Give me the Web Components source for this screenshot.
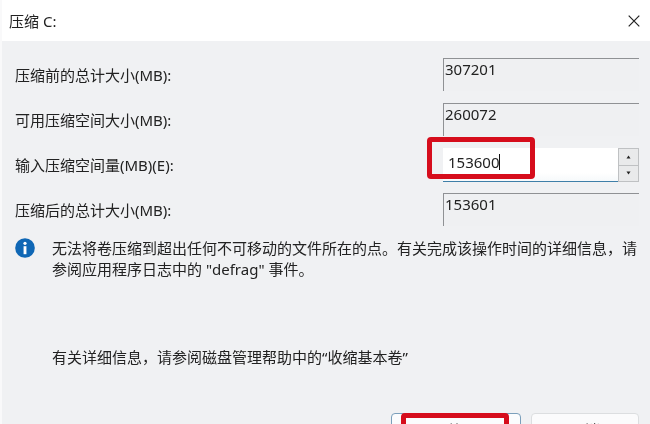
<!DOCTYPE html>
<html>
<head>
<meta charset="utf-8">
<style>
  html, body { margin: 0; padding: 0; background: #f0f1f3; }
  body { width: 650px; height: 424px; overflow: hidden; font-family: "Noto Sans", "Noto Sans CJK SC", sans-serif; }
</style>
</head>
<body>
<shrink-dialog heading="压缩 C:">
  <size-row label="压缩前的总计大小(MB):" value="307201"></size-row>
  <size-row label="可用压缩空间大小(MB):" value="260072"></size-row>
  <size-row label="输入压缩空间量(MB)(E):" value="153600" editable></size-row>
  <size-row label="压缩后的总计大小(MB):" value="153601"></size-row>
</shrink-dialog>
<script>
function safeDefine(name, clazz) {
  if (!customElements.get(name)) customElements.define(name, clazz);
}

const FONT = '"Noto Sans", "Noto Sans CJK SC", sans-serif';

// -- size-row --
class SizeRow extends HTMLElement {
  connectedCallback() {
    if (this.shadowRoot) return;
    this.attachShadow({ mode: 'open' });
    const label = this.getAttribute('label') || '';
    const value = this.getAttribute('value') || '';
    const field = this.hasAttribute('editable')
      ? `<div class="spin"><div class="entry"><span class="num">${value}</span><i class="caret"></i></div>
         <div class="arrows"><b><svg width="5" height="4" viewBox="0 0 5 4"><path d="M2.5 .5L4.5 3.5H.5z" fill="#222"/></svg></b><b><svg width="5" height="4" viewBox="0 0 5 4"><path d="M.5 .5H4.5L2.5 3.5z" fill="#222"/></svg></b></div></div>`
      : `<div class="field"><span>${value}</span></div>`;
    this.shadowRoot.innerHTML = `
      <style>
        :host { display: grid; grid-template-columns: 428px 196px; align-items: stretch; height: 34px; font-family: ${FONT}; color: #222; }
        .label { font-size: 15px; line-height: 20px; align-self: center; margin-top: -1px; }
        .field { box-sizing: border-box; height: 33px; border-top: 1px solid #8f9194; border-left: 1px solid #8f9194; font-size: 15px; line-height: 20px; padding-left: 1px; background: #eff0f2; }
        .spin { display: flex; height: 34px; }
        .entry { flex: 1; display: flex; align-items: center; padding: 0 0 5px 5px; background: linear-gradient(#fff 75%, #f6f9fb); border-bottom: 1px solid #3f7fa8; font-size: 15px; }
        .caret { display: block; width: 1px; height: 16px; background: #111; }
        .arrows { width: 21px; display: grid; grid-template-rows: 1fr 1fr; gap: 1px; background: #bfc1c3; border: 1px solid #bfc1c3; box-sizing: border-box; }
        .arrows b { display: flex; align-items: center; justify-content: center; background: #e9eaeb; }
      </style>
      <div class="label">${label}</div>
      ${field}`;
  }
}
safeDefine('size-row', SizeRow);

// -- info-note --
class InfoNote extends HTMLElement {
  connectedCallback() {
    if (this.shadowRoot) return;
    this.attachShadow({ mode: 'open' });
    this.shadowRoot.innerHTML = `
      <style>
        :host { display: grid; grid-template-columns: 37px 1fr; font-family: ${FONT}; color: #222; font-size: 15px; line-height: 21px; }
        svg { display: block; }
      </style>
      <svg width="20" height="20" viewBox="0 0 21 21">
        <circle cx="10.5" cy="10.5" r="10.3" fill="#0f67b5"/>
        <circle cx="10.5" cy="5.6" r="1.7" fill="#fff"/>
        <rect x="9" y="8.6" width="3" height="8.4" fill="#fff"/>
      </svg>
      <div><slot></slot></div>`;
  }
}
safeDefine('info-note', InfoNote);

// -- dialog-button --
class DialogButton extends HTMLElement {
  connectedCallback() {
    if (this.shadowRoot) return;
    this.attachShadow({ mode: 'open' });
    this.shadowRoot.innerHTML = `
      <style>
        :host { display: block; box-sizing: border-box; width: 108px; height: 34px; border: 1px solid #dcdee0; border-radius: 4px; background: #fbfbfc; text-align: center; font-family: ${FONT}; font-size: 15px; line-height: 32px; color: #222; }
        :host([primary]) { width: 130px; border-color: #7b9fbb; background: #fbfcfd; }
      </style>
      <slot></slot>`;
  }
}
safeDefine('dialog-button', DialogButton);

// -- red-mark: hand drawn highlight lying over the screenshot --
class RedMark extends HTMLElement {
  connectedCallback() {
    if (this.shadowRoot) return;
    this.attachShadow({ mode: 'open' });
    this.shadowRoot.innerHTML = `
      <style>
        :host { display: block; position: absolute; box-sizing: border-box; border: 5px solid #d60d1c; border-radius: 4px; }
      </style>`;
  }
}
safeDefine('red-mark', RedMark);

// -- shrink-dialog --
class ShrinkDialog extends HTMLElement {
  connectedCallback() {
    if (this.shadowRoot) return;
    this.attachShadow({ mode: 'open' });
    this.shadowRoot.innerHTML = `
      <style>
        :host { display: block; position: relative; box-sizing: border-box; width: 650px; height: 424px; overflow: hidden; background: #f0f1f3; border-left: 2px solid #f9f9fa; font-family: ${FONT}; color: #222; filter: blur(.3px); }
        header { display: flex; align-items: center; justify-content: space-between; height: 41px; padding: 0 10px 0 7px; background: #fff; font-size: 15px; }
        .body { padding: 17px 11px 0 13px; }
        .rows { display: flex; flex-direction: column; gap: 11px; }
        info-note { margin-top: 11px; }
        .more { margin: 67px 0 0 37px; font-size: 15px; line-height: 20px; }
        .actions { display: flex; justify-content: flex-end; gap: 10px; margin: 46px 0 0; }
        .first { top: 413px; left: 399px; width: 108px; height: 30px; }
        .second { top: 137px; left: 425px; width: 108px; height: 42px; }
      </style>
      <header><span>${this.getAttribute('heading') || ''}</span>
        <svg width="12" height="12" viewBox="0 0 12 12"><path d="M.7 .7L11.3 11.3M11.3 .7L.7 11.3" stroke="#222" stroke-width="1.2" fill="none"/></svg>
      </header>
      <div class="body">
        <div class="rows"><slot></slot></div>
        <info-note>无法将卷压缩到超出任何不可移动的文件所在的点。有关完成该操作时间的详细信息，请参阅应用程序日志中的 "defrag" 事件。</info-note>
        <div class="more">有关详细信息，请参阅磁盘管理帮助中的“收缩基本卷”</div>
        <div class="actions"><dialog-button primary>压缩(S)</dialog-button><dialog-button>取消</dialog-button></div>
      </div>
      <red-mark class="second"></red-mark>
      <red-mark class="first"></red-mark>`;
  }
}
safeDefine('shrink-dialog', ShrinkDialog);
</script>
</body>
</html>
